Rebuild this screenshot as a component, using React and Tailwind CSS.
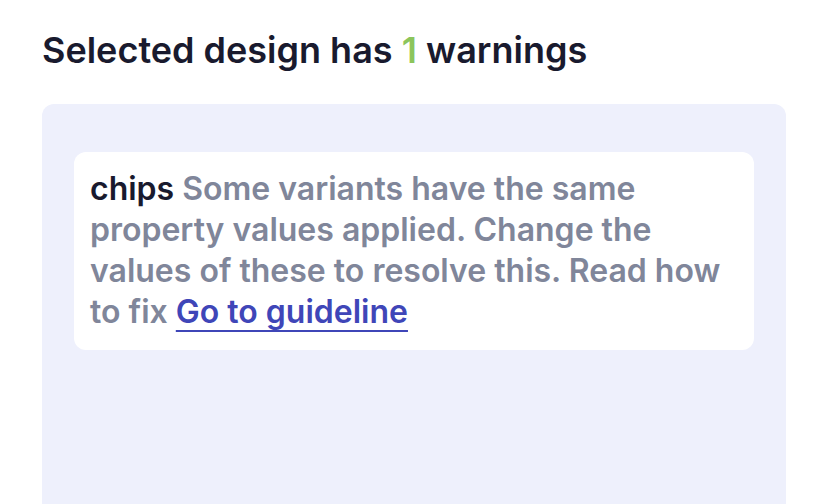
export default function App() {
  return (
    <div className="min-h-[504px] bg-white font-['Inter',sans-serif] pl-[42px] pr-[46px] pt-[28px]">
      <h1 className="text-[36px] leading-[44px] font-semibold text-[#191a2e]">
        Selected design has <span className="text-[#8cc55c]">1</span> warnings
      </h1>
      <div className="mt-[32px] min-h-[400px] rounded-t-[12px] bg-[#eef0fc] px-[32px] pt-[48px]">
        <div className="rounded-[12px] bg-white px-[16px] pt-[16px] pb-[18px]">
          <p className="text-[32px] leading-[41px] font-semibold text-[#80869a]">
            <span className="text-[#191a2e]">chips</span> Some variants have the same property values
            applied. Change the values of these to resolve this. Read how to fix{' '}
            <a href="#" className="text-[#3f46b8] underline underline-offset-[7px] decoration-[2px]">
              Go to guideline
            </a>
          </p>
        </div>
      </div>
    </div>
  )
}
